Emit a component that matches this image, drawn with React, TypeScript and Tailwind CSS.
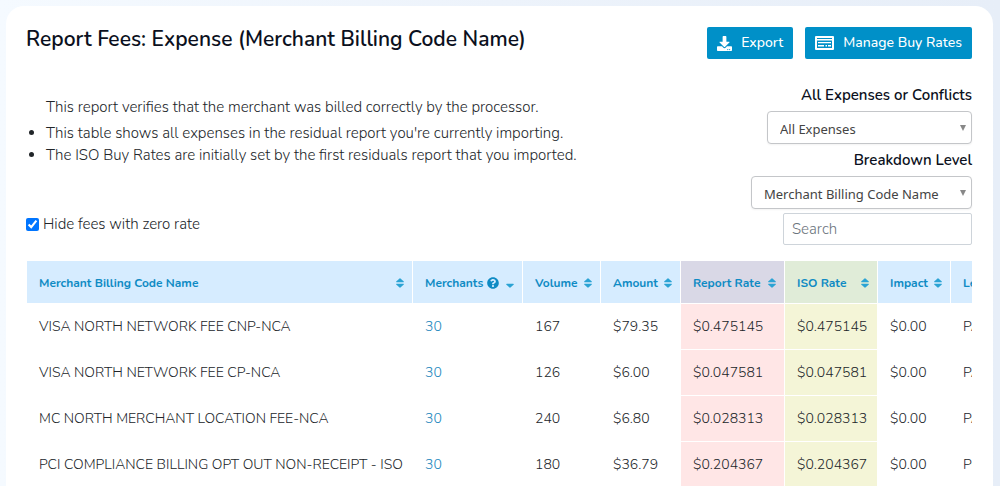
import { FaDownload, FaQuestionCircle } from "react-icons/fa";

type Sort = "both" | "down";

interface Column {
  label: string;
  width: string;
  head: string;
  cell: string;
  sort?: Sort;
  help?: boolean;
}

const columns: Column[] = [
  { label: "Merchant Billing Code Name", width: "w-[386px]", head: "bg-[#d6ecff]", cell: "bg-white", sort: "both" },
  { label: "Merchants", width: "w-[110px]", head: "bg-[#d6ecff]", cell: "bg-white", sort: "down", help: true },
  { label: "Volume", width: "w-[78px]", head: "bg-[#d6ecff]", cell: "bg-white", sort: "both" },
  { label: "Amount", width: "w-[80px]", head: "bg-[#d6ecff]", cell: "bg-white", sort: "both" },
  { label: "Report Rate", width: "w-[104px]", head: "bg-[#d9d8e6]", cell: "bg-[#ffe6e6]", sort: "both" },
  { label: "ISO Rate", width: "w-[93px]", head: "bg-[#e0ecd8]", cell: "bg-[#f4f5d7]", sort: "both" },
  { label: "Impact", width: "w-[73px]", head: "bg-[#d6ecff]", cell: "bg-white", sort: "both" },
  { label: "Level", width: "w-[90px]", head: "bg-[#d6ecff]", cell: "bg-white", sort: "both" },
];

const rows: string[][] = [
  ["VISA NORTH NETWORK FEE CNP-NCA", "30", "167", "$79.35", "$0.475145", "$0.475145", "$0.00", "PASS"],
  ["VISA NORTH NETWORK FEE CP-NCA", "30", "126", "$6.00", "$0.047581", "$0.047581", "$0.00", "PASS"],
  ["MC NORTH MERCHANT LOCATION FEE-NCA", "30", "240", "$6.80", "$0.028313", "$0.028313", "$0.00", "PASS"],
  ["PCI COMPLIANCE BILLING OPT OUT NON-RECEIPT - ISO", "30", "180", "$36.79", "$0.204367", "$0.204367", "$0.00", "PCI"],
];

function SortIcon({ kind }: { kind: Sort }) {
  return (
    <svg viewBox="0 0 8 10" className="mt-px h-[10px] w-2 shrink-0 fill-[#2ba3d4]" aria-hidden="true">
      {kind === "both" && <path d="M3.6 .4a.6.6 0 0 1 .8 0L7.6 3.3c.4.4.2 1-.4 1H.8c-.6 0-.8-.6-.4-1z" />}
      <path d="M3.6 9.6a.6.6 0 0 0 .8 0L7.6 6.7c.4-.4.2-1-.4-1H.8c-.6 0-.8.6-.4 1z" />
    </svg>
  );
}

function RatesIcon() {
  return (
    <svg viewBox="0 0 19 14" className="h-[14px] w-[19px]" aria-hidden="true">
      <path
        fill="currentColor"
        fillRule="evenodd"
        d="M1 0h17a1 1 0 0 1 1 1v12a1 1 0 0 1-1 1H1a1 1 0 0 1-1-1V1a1 1 0 0 1 1-1zM2 2v1h15V2zM2 4.5V12h15V4.5zM3 6h13v1.3H3zM3 9h6v1.5H3zM10.5 9H12v1.5h-1.5zM13 9h3v1.5h-3z"
      />
    </svg>
  );
}

function SelectBox({ id, label, option, width }: { id: string; label: string; option: string; width: string }) {
  return (
    <>
      <label htmlFor={id} className="text-[15px] leading-6 font-semibold text-[#0b1020]">{label}</label>
      <div className={`relative mt-1 ${width}`}>
        <select
          id={id}
          className="block h-[33px] w-full appearance-none rounded border border-[#c4c6c9] bg-white pt-1 pl-3 font-['Noto_Sans'] text-[13px] font-normal text-[#444] shadow-xs"
        >
          <option>{option}</option>
        </select>
        <svg viewBox="0 0 6 6" className="pointer-events-none absolute top-[14px] right-[6px] size-[6px] fill-[#888]" aria-hidden="true">
          <path d="M0 0h6L3 6z" />
        </svg>
      </div>
    </>
  );
}

export default function App() {
  return (
    <div className="min-h-screen bg-linear-to-r from-[#f5faff] via-[#edf3fb] to-[#e7eef8] pt-[6px] pr-[7px] pl-[6px] font-['Nunito','Open_Sans',sans-serif] font-light text-[#212529]">
      <main className="rounded-t-[18px] bg-white pt-[21px] pr-[21px] pl-5">
        <header className="flex items-start justify-between">
          <h1 className="text-[21px] leading-6 font-semibold text-[#0b1020]">Report Fees: Expense (Merchant Billing Code Name)</h1>
          <div className="flex gap-3">
            <button className="flex h-8 items-center gap-[9px] rounded-xs bg-[#0090c8] px-[10px] text-sm font-medium text-white">
              <FaDownload className="size-[15px]" />
              Export
            </button>
            <button className="flex h-8 items-center gap-[9px] rounded-xs bg-[#0090c8] px-[10px] text-sm font-medium text-white">
              <RatesIcon />
              Manage Buy Rates
            </button>
          </div>
        </header>

        <div className="mt-6 flex justify-between">
          <div className="flex flex-col justify-between pt-[13px] pb-[11px] text-[15px]">
            <div className="pl-5 leading-[22px]">
              <p className="mb-1">This report verifies that the merchant was billed correctly by the processor.</p>
              <ul className="list-disc">
                <li>This table shows all expenses in the residual report you're currently importing.</li>
                <li>The ISO Buy Rates are initially set by the first residuals report that you imported.</li>
              </ul>
            </div>
            <label className="flex items-center gap-1 leading-5">
              <input type="checkbox" defaultChecked className="size-[13px] accent-[#0075ff]" />
              Hide fees with zero rate
            </label>
          </div>
          <div className="flex flex-col items-end">
            <SelectBox id="expenses" label="All Expenses or Conflicts" option="All Expenses" width="w-[205px]" />
            <div className="h-1" />
            <SelectBox id="level" label="Breakdown Level" option="Merchant Billing Code Name" width="w-[221px]" />
            <input
              aria-label="Search"
              placeholder="Search"
              className="mt-1 h-8 w-[189px] rounded-xs border border-[#ced4da] px-2 text-[15px] placeholder:text-[#6c757d]"
            />
          </div>
        </div>

        <div className="mt-4 ml-px overflow-x-auto">
          <table className="w-[1014px] table-fixed border-separate border-spacing-0 text-left whitespace-nowrap">
            <thead>
              <tr className="h-[43px]">
                {columns.map((c) => (
                  <th key={c.label} className={`border-r border-b border-white pt-px pr-2 pl-3 text-[12px] font-bold text-[#0f8bc4] ${c.width} ${c.head}`}>
                    <div className="flex items-center justify-between">
                      <span className="flex items-center gap-1">
                        {c.label}
                        {c.help && <FaQuestionCircle className="size-3" />}
                      </span>
                      {c.sort && <SortIcon kind={c.sort} />}
                    </div>
                  </th>
                ))}
              </tr>
            </thead>
            <tbody>
              {rows.map((row) => (
                <tr key={row[0]} className="h-[46px]">
                  {row.map((value, i) => (
                    <td key={i} className={`border-r border-b border-white pt-px pl-3 text-sm ${columns[i].cell}`}>
                      {i === 1 ? <a href="#merchants" className="text-[#1a86bd]">{value}</a> : value}
                    </td>
                  ))}
                </tr>
              ))}
            </tbody>
          </table>
        </div>
      </main>
    </div>
  );
}
